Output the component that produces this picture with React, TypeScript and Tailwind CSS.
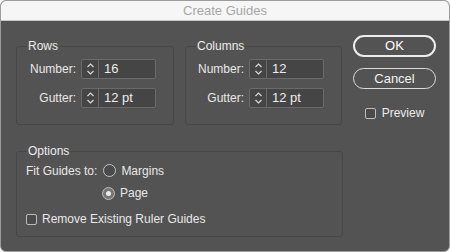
import React from "react";

function Stepper({ value }: { value: string }) {
  return (
    <div className="flex h-[20px] w-[75px] items-stretch rounded-[2px] border border-[#6a6a6a] bg-[#454545]">
      <div className="flex w-[17px] flex-col items-center justify-center border-r border-[#6a6a6a]">
        <svg width="9" height="14" viewBox="0 0 9 14" fill="none" stroke="#d8d8d8" strokeWidth="1.2">
          <path d="M1.5 5 L4.5 2 L7.5 5" />
          <path d="M1.5 9 L4.5 12 L7.5 9" />
        </svg>
      </div>
      <div className="flex items-center pl-[5px] text-[13px] text-[#ececec]">{value}</div>
    </div>
  );
}

function Field({ label, value, labelW }: { label: string; value: string; labelW: string }) {
  return (
    <div className="flex items-center gap-[5px]">
      <span className={`${labelW} text-right text-[12px] text-[#e8e8e8]`}>{label}</span>
      <Stepper value={value} />
    </div>
  );
}

function Group({ title, number, gutter, labelW }: { title: string; number: string; gutter: string; labelW: string }) {
  return (
    <fieldset className="h-[86px] rounded-[3px] border border-[#474747] pl-[8px]">
      <legend className="ml-[2px] px-[1px] text-[12px] leading-[14px] text-[#ececec]">{title}</legend>
      <div className="flex flex-col gap-[9px] pt-[6px]">
        <Field label="Number:" value={number} labelW={labelW} />
        <Field label="Gutter:" value={gutter} labelW={labelW} />
      </div>
    </fieldset>
  );
}

function Checkbox() {
  return <span className="inline-block h-[11px] w-[11px] rounded-[2px] border border-[#bdbdbd] bg-[#4a4a4a]" />;
}

export default function App() {
  return (
    <div className="h-[252px] w-[450px] bg-white" style={{ fontFamily: '"Liberation Sans", Arial, sans-serif' }}>
      <div className="flex h-full w-full flex-col overflow-hidden rounded-[6px] border border-[#9c9c9c] bg-[#535353]">
        <div className="flex h-[20px] items-center justify-center border-b border-[#c8c8c8] bg-[#f6f6f6] text-[13px] text-[#a6a6a6]">
          Create Guides
        </div>
        <div className="flex pl-[15px] pt-[18px]">
          <div className="flex w-[327px] flex-col">
            <div className="flex gap-[11px]">
              <div className="w-[158px]">
                <Group title="Rows" number="16" gutter="12 pt" labelW="w-[51px]" />
              </div>
              <div className="w-[157px]">
                <Group title="Columns" number="12" gutter="12 pt" labelW="w-[50px]" />
              </div>
            </div>
            <fieldset className="mt-[19px] h-[93px] rounded-[3px] border border-[#474747] pl-[9px]">
              <legend className="ml-[1px] px-[1px] text-[12px] leading-[14px] text-[#ececec]">Options</legend>
              <div className="flex h-[22px] items-center pt-[3px] text-[12px] text-[#e8e8e8]">
                <span>Fit Guides to:</span>
                <span className="ml-[6px] inline-block h-[13px] w-[13px] rounded-full border border-[#c4c4c4] bg-[#4a4a4a]" />
                <span className="ml-[5px]">Margins</span>
              </div>
              <div className="mt-[2px] flex h-[22px] items-center pl-[76px] text-[12px] text-[#e8e8e8]">
                <span className="flex h-[13px] w-[13px] items-center justify-center rounded-full border border-[#bcbcbc] bg-[#767676]">
                  <span className="h-[5px] w-[5px] rounded-full bg-[#ececec]" />
                </span>
                <span className="ml-[5px]">Page</span>
              </div>
              <div className="mt-[4px] flex h-[22px] items-center text-[12px] text-[#e8e8e8]">
                <Checkbox />
                <span className="ml-[5px]">Remove Existing Ruler Guides</span>
              </div>
            </fieldset>
          </div>
          <div className="ml-[10px] flex flex-col items-center">
            <div className="-mt-[4px] flex h-[22px] w-[83px] items-center justify-center rounded-full border-2 border-[#ededed] text-[13px] text-white">
              OK
            </div>
            <div className="mt-[11px] flex h-[21px] w-[83px] items-center justify-center rounded-full border-[1.5px] border-[#dcdcdc] text-[13px] text-[#f2f2f2]">
              Cancel
            </div>
            <div className="mt-[15px] flex items-center gap-[6px] text-[12px] text-[#ececec]">
              <Checkbox />
              <span>Preview</span>
            </div>
          </div>
        </div>
      </div>
    </div>
  );
}
